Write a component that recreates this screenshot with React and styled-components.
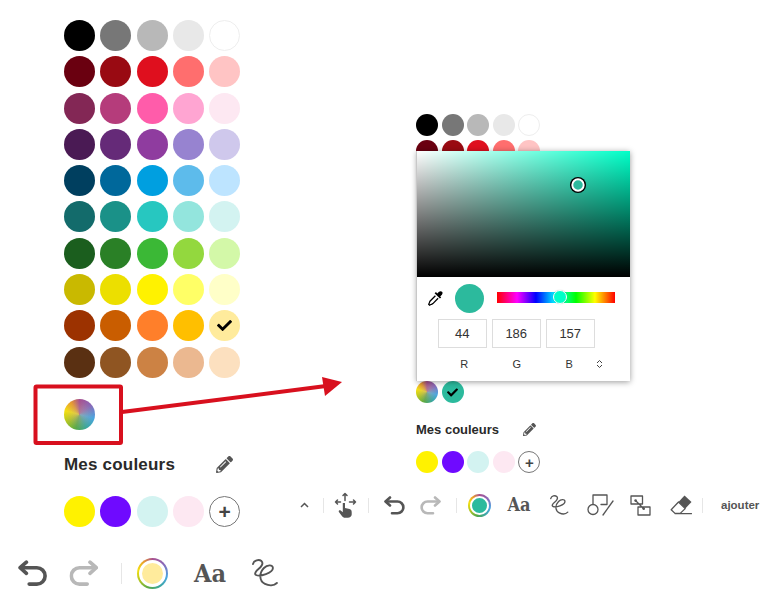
import React from "react";
import styled, { createGlobalStyle } from "styled-components";
import { FaCheck, FaPencilAlt } from "react-icons/fa";

const Global = createGlobalStyle`
  html, body { margin: 0; padding: 0; background: #fff; }
  body { font-family: "Liberation Sans", Arial, sans-serif; }
`;

const RAINBOW = "conic-gradient(from 0deg, #a8508f 0deg, #8a68b8 50deg, #4aa6e0 105deg, #3ba7a0 150deg, #58a848 195deg, #b8c820 245deg, #f5e010 285deg, #e89a30 325deg, #a8508f 360deg)";

const PALETTE = [
  ["#000000", "#777777", "#b8b8b8", "#e8e8e8", "#ffffff"],
  ["#6a0010", "#990a12", "#df0f1e", "#ff6e6e", "#ffc4c4"],
  ["#832755", "#b53c7b", "#ff5caa", "#ffa5d2", "#fde8f2"],
  ["#4a1a54", "#652a78", "#8f3c9f", "#9783d0", "#cfc8ec"],
  ["#003f5f", "#00689b", "#009fe0", "#5dbbeb", "#bde4ff"],
  ["#136b6b", "#1a9188", "#27c7c0", "#93e5dd", "#d3f3f1"],
  ["#1b5e1e", "#2a8026", "#3bb836", "#93d83e", "#d3f8a8"],
  ["#c9b900", "#ecdf00", "#fff200", "#ffff66", "#ffffc8"],
  ["#9c3200", "#c95d00", "#ff7f2a", "#ffbf00", "#ffeb9c"],
  ["#5a3012", "#8f5522", "#cc8244", "#ebb890", "#fce0bf"],
];
const MINE = ["#fff200", "#6f0aff", "#d3f3f1", "#fde8f2"];

const Page = styled.div`
  position: relative;
  display: flex;
  width: 762px;
  height: 611px;
  overflow: hidden;
  background: #fff;
`;
const LeftColumn = styled.section`
  width: 296px;
  flex: none;
  padding-top: 20px;
  box-sizing: border-box;
`;
const RightColumn = styled.section`
  width: 466px;
  flex: none;
  padding-top: 114px;
  box-sizing: border-box;
`;
const Palette = styled.div`
  position: relative;
  margin-left: ${(p) => p.$left}px;
  width: ${(p) => p.$size * 5 + p.$gap * 4}px;
  --size: ${(p) => p.$size}px;
  --gap: ${(p) => p.$gap}px;
`;
const Grid = styled.div`
  display: grid;
  grid-template-columns: repeat(5, var(--size));
  grid-auto-rows: var(--size);
  gap: var(--gap);
`;
const Row = styled.div`
  display: flex;
  gap: var(--gap);
  margin-top: ${(p) => p.$top}px;
`;
const Swatch = styled.div`
  width: var(--size);
  height: var(--size);
  flex: none;
  box-sizing: border-box;
  border-radius: 50%;
  background: ${(p) => p.$color};
  border: ${(p) => (p.$color === "#ffffff" ? "1px solid #eeeeee" : "none")};
  display: flex;
  align-items: center;
  justify-content: center;
  color: #000;
  font-size: ${(p) => p.$check}px;
`;
const RainbowSwatch = styled(Swatch)`
  background: radial-gradient(circle, rgba(190, 170, 150, 0.55) 0%, rgba(190, 170, 150, 0) 65%), ${RAINBOW};
`;
const AddSwatch = styled(Swatch)`
  background: #fff;
  border: 1px solid #777;
  color: #444;
  font-size: ${(p) => p.$plus}px;
  font-weight: 700;
  line-height: 1;
`;
const TitleRow = styled.div`
  display: flex;
  align-items: center;
  height: ${(p) => p.$h}px;
  margin-top: ${(p) => p.$top}px;
  font-weight: 700;
  color: #2a2a2a;
  font-size: ${(p) => p.$font}px;
  letter-spacing: ${(p) => p.$track}px;
`;
const EditIcon = styled.span`
  margin-left: ${(p) => p.$left}px;
  display: flex;
  color: #555;
  font-size: ${(p) => p.$size}px;
`;

const Popup = styled.div`
  position: absolute;
  left: 1px;
  top: 37px;
  width: 213px;
  height: 230px;
  background: #fff;
  box-shadow: -1px 0 0 #c8c8c8, 0 1px 6px rgba(0, 0, 0, 0.4);
  display: flex;
  flex-direction: column;
`;
const SaturationBox = styled.div`
  position: relative;
  height: 126px;
  flex: none;
  background: linear-gradient(to top, #000, rgba(0, 0, 0, 0)), linear-gradient(to right, #fff, rgba(255, 255, 255, 0)), #00ffc8;
`;
const Handle = styled.div`
  position: absolute;
  left: 154px;
  top: 27px;
  width: 14px;
  height: 14px;
  box-sizing: border-box;
  border-radius: 50%;
  background: #2cba9d;
  border: 2px solid #fff;
  box-shadow: 0 0 0 1.5px #000;
  transform: scale(0.95);
`;
const ControlRow = styled.div`
  display: flex;
  align-items: center;
  height: 30px;
  margin-top: 6px;
  padding-left: 11px;
`;
const Dropper = styled.svg`
  width: 15px;
  height: 15px;
  flex: none;
`;
const CurrentColor = styled.div`
  width: 29px;
  height: 29px;
  margin-left: 12px;
  border-radius: 50%;
  background: #2cba9d;
  flex: none;
`;
const HueTrack = styled.div`
  position: relative;
  margin: -1px 0 0 13px;
  width: 118px;
  height: 11px;
  background: linear-gradient(to right, #f00 0%, #f0f 17%, #00f 33%, #0ff 50%, #0f0 67%, #ff0 83%, #f00 100%);
`;
const HueThumb = styled.div`
  position: absolute;
  left: 56px;
  top: -2px;
  width: 14px;
  height: 14px;
  box-sizing: border-box;
  border-radius: 50%;
  background: #00ffc8;
  border: 1.5px solid #fff;
  box-shadow: 0 0 1px rgba(0, 0, 0, 0.3);
`;
const InputRow = styled.div`
  display: flex;
  gap: 5.5px;
  margin-top: 6px;
  padding-left: 21px;
`;
const ValueBox = styled.div`
  width: 48.5px;
  height: 29px;
  box-sizing: border-box;
  border: 1px solid #dddddd;
  display: flex;
  align-items: center;
  justify-content: center;
  font-size: 13px;
  color: #333;
`;
const LabelRow = styled.div`
  display: flex;
  align-items: center;
  margin-top: 9px;
  padding-left: 21px;
  height: 14px;
  font-size: 11px;
  color: #333;
`;
const ChannelLabel = styled.span`
  width: 52.5px;
  text-align: center;
`;
const ModeToggle = styled.svg`
  width: 7px;
  height: 10px;
`;

const Toolbar = styled.div`
  display: flex;
  align-items: center;
  height: ${(p) => p.$h}px;
  margin-top: ${(p) => p.$top}px;
  padding-left: ${(p) => p.$pad || 0}px;
  color: #555;
`;
const Slot = styled.div`
  width: ${(p) => p.$w}px;
  flex: none;
  display: flex;
  align-items: center;
  justify-content: center;
`;
const Separator = styled.div`
  width: 1px;
  height: ${(p) => p.$h}px;
  flex: none;
  background: #e6e6e6;
  margin: 0 ${(p) => p.$r}px 0 ${(p) => p.$l}px;
`;
const FontTool = styled.span`
  font-family: "DejaVu Serif", serif;
  font-weight: 700;
  font-stretch: condensed;
  font-size: ${(p) => p.$size}px;
  letter-spacing: 0;
  color: #555;
  line-height: 1;
`;
const AddText = styled.span`
  font-size: 11.5px;
  font-weight: 700;
  color: #555;
  padding-left: 18px;
  white-space: nowrap;
`;
const Ring = styled.div`
  width: ${(p) => p.$size}px;
  height: ${(p) => p.$size}px;
  border-radius: 50%;
  background: ${RAINBOW};
  display: flex;
  align-items: center;
  justify-content: center;
`;
const RingCore = styled.div`
  box-sizing: content-box;
  width: ${(p) => p.$size}px;
  height: ${(p) => p.$size}px;
  border-radius: 50%;
  background: ${(p) => p.$color};
  border: ${(p) => p.$edge}px solid #fff;
`;
const Annotation = styled.svg`
  position: absolute;
  left: 0;
  top: 0;
  pointer-events: none;
`;

const Icon = ({ w, h, vw, vh, children }) => (
  <svg width={w} height={h} viewBox={`0 0 ${vw} ${vh}`} fill="none" stroke="currentColor" strokeLinecap="round" strokeLinejoin="round">
    {children}
  </svg>
);
const Undo = ({ k = 1, flip, color }) => (
  <svg width={21 * k} height={19 * k} viewBox="0 0 21 19" fill="none" stroke={color || "#555"} strokeWidth="2.6" strokeLinecap="round" strokeLinejoin="round" style={flip ? { transform: "scaleX(-1)" } : undefined}>
    <path d="M6 1.5 1.5 5.5 6 9.5" />
    <path d="M2 5.5h11.5a5.8 5.8 0 0 1 0 11.700H8" />
  </svg>
);
const Scribble = ({ k = 1 }) => (
  <Icon w={18.5 * k} h={20 * k} vw={26} vh={28}>
    <path strokeWidth="1.9" d="M1 5C2 1 7 0 9.5 2 12 4.5 9 8 6.5 10 4 12 2 15 4 16c4 2 17-2 17-7 0-4-6-3-9 0-5 5-5 13 1 16 4 2 9 2 12-1" />
  </Icon>
);
const Shapes = () => (
  <Icon w={27} h={22} vw={27} vh={22}>
    <path strokeWidth="1.3" d="M6 10V1h14v9.5H14" />
    <circle strokeWidth="1.3" cx="6" cy="15.5" r="5" fill="#fff" />
    <path strokeWidth="1.3" d="M26 7 16 21" />
  </Icon>
);
const Diagram = () => (
  <Icon w={21} h={21} vw={21} vh={21}>
    <path strokeWidth="1.3" d="M1 1h11.5v8H1zM8 12h12v8H8zM6 6l8 8" />
    <circle cx="5.6" cy="5.6" r="1.3" fill="currentColor" stroke="none" />
    <circle cx="13.6" cy="13.6" r="1.3" fill="currentColor" stroke="none" />
  </Icon>
);
const Eraser = () => (
  <Icon w={22} h={20} vw={22} vh={20}>
    <path fill="currentColor" stroke="none" d="M8.5 7 14.5.6 21.5 7l-6.2 6.6z" />
    <path strokeWidth="1.3" d="M8.5 7 1.2 14.7 5 18.4h5.2l5-4.8zM5 18.6h16.5" />
  </Icon>
);
const MoveHand = () => (
  <svg width="23" height="26" viewBox="0 0 23 26" fill="none" stroke="#555" strokeWidth="1.5" strokeLinecap="round" strokeLinejoin="round">
    <path d="M11 1.5v7M9 3.500l2-2 2 2M1.5 10h5M3.5 8l-2 2 2 2M15.5 10h6M19.5 8l2 2-2 2" />
    <path fill="#555" stroke="none" d="M8.800 11h2.200v5l4.500 1c1.500.4 2.200 1.500 2.200 3v2.500c0 1.900-1.700 3.300-3.800 3.300h-2.700c-1.500 0-2.500-.6-3.300-1.800l-3-4c-.8-1.300.8-2.400 1.800-1.400l2.100 1.700z" />
  </svg>
);

function ToolbarRight() {
  return (
    <Toolbar $h={24} $top={20}>
      <Slot $w={16}>
        <svg width="9" height="6" viewBox="0 0 9 6" fill="none" stroke="#555" strokeWidth="1.5"><path d="M1 5l3.500-3.500L8 5" /></svg>
      </Slot>
      <Separator $h={15} $l={11} $r={0} />
      <Slot $w={42}><MoveHand /></Slot>
      <Separator $h={15} $l={2} $r={7} />
      <Slot $w={36}><Undo /></Slot>
      <Slot $w={36}><Undo flip color="#b8b8b8" /></Slot>
      <Separator $h={15} $l={8} $r={2} />
      <Slot $w={40}><Ring $size={23}><RingCore $size={15} $edge={2} $color="#2cba9d" /></Ring></Slot>
      <Slot $w={40}><FontTool $size={18}>Aa</FontTool></Slot>
      <Slot $w={41}><Scribble /></Slot>
      <Slot $w={40}><Shapes /></Slot>
      <Slot $w={40}><Diagram /></Slot>
      <Slot $w={42}><Eraser /></Slot>
      <Separator $h={15} $l={0} $r={0} />
      <AddText>ajouter</AddText>
    </Toolbar>
  );
}

function ToolbarLeft() {
  return (
    <Toolbar $h={31} $top={31} $pad={8}>
      <Slot $w={50}><Undo k={1.4} /></Slot>
      <Slot $w={52}><Undo k={1.4} flip color="#b8b8b8" /></Slot>
      <Separator $h={21} $l={11} $r={0} />
      <Slot $w={60}><Ring $size={31}><RingCore $size={21} $edge={3} $color="#ffeb9c" /></Ring></Slot>
      <Slot $w={56}><FontTool $size={25}>Aa</FontTool></Slot>
      <Slot $w={54}><Scribble k={1.4} /></Slot>
    </Toolbar>
  );
}

function PaletteGrid({ check }) {
  return (
    <Grid>
      {PALETTE.flat().map((c, i) => (
        <Swatch key={i} $color={c} $check={check}>
          {c === "#ffeb9c" && check ? <FaCheck /> : null}
        </Swatch>
      ))}
    </Grid>
  );
}

export default function App() {
  return (
    <Page>
      <Global />
      <LeftColumn>
        <Palette $left={64} $size={31} $gap={5.3}>
          <PaletteGrid check={15} />
          <Row $top={21}><RainbowSwatch /></Row>
          <TitleRow $h={24} $top={23} $font={17} $track={0.2}>
            Mes couleurs
            <EditIcon $left={41} $size={17}><FaPencilAlt /></EditIcon>
          </TitleRow>
          <Row $top={19}>
            {MINE.map((c) => <Swatch key={c} $color={c} />)}
            <AddSwatch $plus={21}>+</AddSwatch>
          </Row>
        </Palette>
        <ToolbarLeft />
      </LeftColumn>
      <RightColumn>
        <Palette $left={120} $size={22} $gap={3.6}>
          <PaletteGrid />
          <Popup>
            <SaturationBox><Handle /></SaturationBox>
            <ControlRow>
              <Dropper viewBox="0 0 15 15">
                <path fill="#000" d="M9.200 2.400 11 .8c1-.9 2.300-.9 3 0 .8.800.7 2-.1 2.900l-1.700 1.700 1 1-1.300 1.200L6.600 2.300 8 1.100z" />
                <path fill="none" stroke="#000" strokeWidth="1.3" d="M7.400 4.700 2.200 10c-.6.600-.5 1.300-.9 2l-.6 1.200.9.900 1.300-.6c.7-.3 1.300-.3 2-.9l5.200-5.300" />
              </Dropper>
              <CurrentColor />
              <HueTrack><HueThumb /></HueTrack>
            </ControlRow>
            <InputRow>
              <ValueBox>44</ValueBox>
              <ValueBox>186</ValueBox>
              <ValueBox>157</ValueBox>
            </InputRow>
            <LabelRow>
              <ChannelLabel>R</ChannelLabel>
              <ChannelLabel>G</ChannelLabel>
              <ChannelLabel>B</ChannelLabel>
              <ModeToggle viewBox="0 0 7 10">
                <path fill="none" stroke="#444" strokeWidth="1" d="M1 4l2.500-2.500L6 4M1 6l2.500 2.500L6 6" />
              </ModeToggle>
            </LabelRow>
          </Popup>
          <Row $top={15}>
            <RainbowSwatch />
            <Swatch $color="#2cba9d" $check={11}><FaCheck /></Swatch>
          </Row>
          <TitleRow $h={16} $top={18} $font={13} $track={0}>
            Mes couleurs
            <EditIcon $left={24} $size={13}><FaPencilAlt /></EditIcon>
          </TitleRow>
          <Row $top={14}>
            {MINE.map((c) => <Swatch key={c} $color={c} />)}
            <AddSwatch $plus={15}>+</AddSwatch>
          </Row>
        </Palette>
        <ToolbarRight />
      </RightColumn>
      <Annotation width="762" height="611" viewBox="0 0 762 611">
        <rect x="35.500" y="386.500" width="85.500" height="56.500" rx="1" fill="none" stroke="#d8101e" strokeWidth="4" />
        <path d="M122 412 326 386" stroke="#d8101e" strokeWidth="4" fill="none" />
        <path d="M322 377 342 382 325 396z" fill="#d8101e" />
      </Annotation>
    </Page>
  );
}
